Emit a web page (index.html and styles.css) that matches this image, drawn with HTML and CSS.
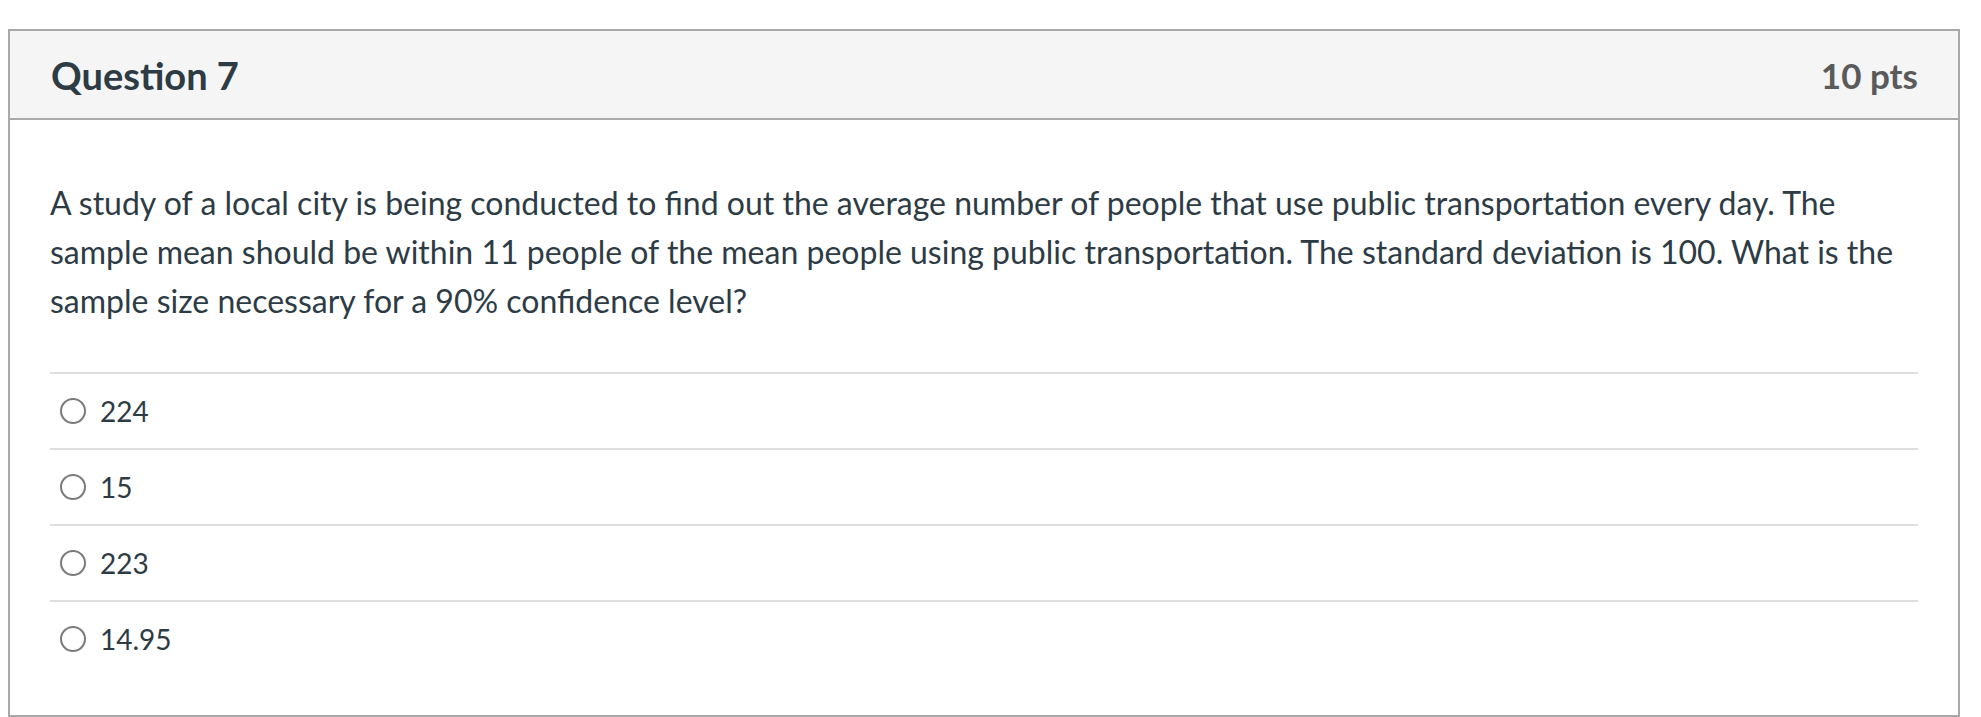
FILE: index.html
```html
<!DOCTYPE html>
<html lang="en">
<head>
<meta charset="utf-8">
<title>Question 7</title>
<link rel="stylesheet" href="styles.css">
</head>
<body>
<div class="question">
  <div class="q-header">
    <span class="q-title">Question 7</span>
    <span class="q-points">10 pts</span>
  </div>
  <div class="q-body">
    <p class="q-text">A study of a local city is being conducted to find out the average number of people that use public transportation every day. The sample mean should be within 11 people of the mean people using public transportation. The standard deviation is 100. What is the sample size necessary for a 90% confidence level?</p>
    <div class="answers">
      <label class="answer"><span class="radio"></span><span class="answer-text">224</span></label>
      <label class="answer"><span class="radio"></span><span class="answer-text">15</span></label>
      <label class="answer"><span class="radio"></span><span class="answer-text">223</span></label>
      <label class="answer"><span class="radio"></span><span class="answer-text">14.95</span></label>
    </div>
  </div>
</div>
</body>
</html>
```

FILE: styles.css
```css
* { box-sizing: border-box; }
html, body { margin: 0; padding: 0; background: #ffffff; }
body {
  font-family: Lato, "Noto Sans", sans-serif;
  color: #2d3b45;
  overflow: hidden;
}
.question {
  margin: 29px 21px 0 8px;
  border: 2px solid #a9a9a9;
}
.q-header {
  display: flex;
  justify-content: space-between;
  align-items: center;
  height: 89px;
  padding: 0 40px 0 41px;
  background: #f5f5f5;
  border-bottom: 2px solid #a9a9a9;
}
.q-title {
  font-size: 38px;
  font-weight: 700;
  color: #2d3b45;
}
.q-points {
  font-size: 35px;
  font-weight: 700;
  color: #5a5a5a;
}
.q-body {
  padding: 58px 40px 39px 40px;
}
.q-text {
  margin: 0 0 47px 0;
  font-size: 32px;
  line-height: 49px;
  color: #2d3b45;
}
.answers { display: flex; flex-direction: column; }
.answer {
  display: flex;
  align-items: center;
  height: 76px;
  border-top: 2px solid #dedede;
  padding-left: 10px;
}
.radio {
  width: 26px;
  height: 26px;
  border: 2px solid #7a7a7a;
  border-radius: 50%;
  flex: none;
  margin-right: 14px;
}
.answer-text {
  font-size: 28px;
  color: #2d3b45;
}
```
